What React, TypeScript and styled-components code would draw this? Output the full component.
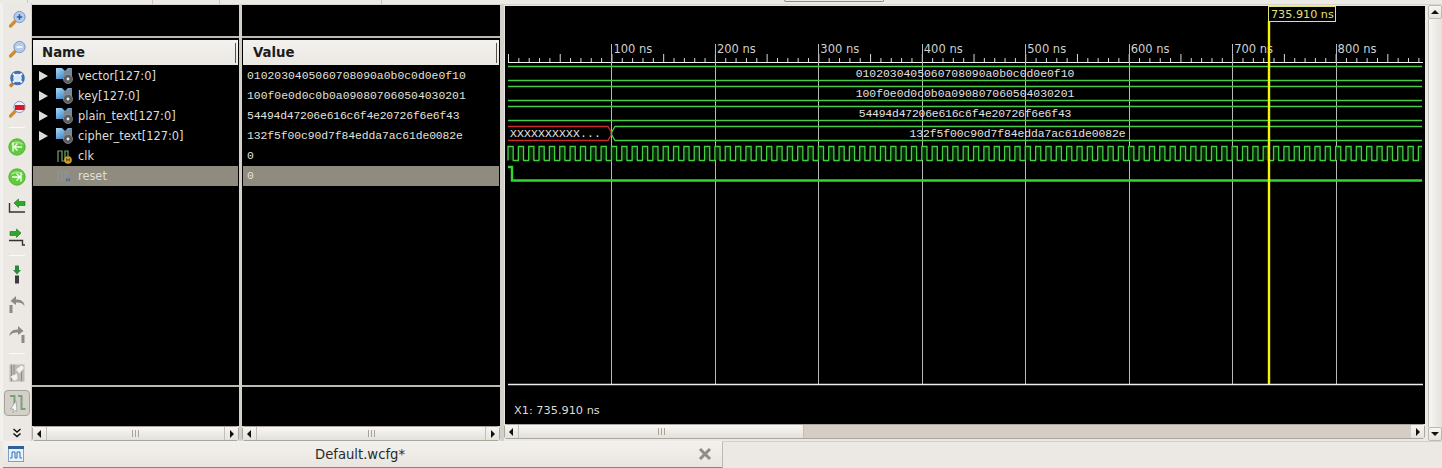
import React from "react";
import styled, { createGlobalStyle } from "styled-components";

const Global = createGlobalStyle`
  html, body { margin: 0; padding: 0; background: #ece9e4; overflow: hidden; }
  #root { width: 1442px; height: 468px; }
`;

const Page = styled.div`
  width: 1442px; height: 468px; display: flex; flex-direction: column;
  background: #ece9e4; font-family: "DejaVu Sans", sans-serif; overflow: hidden;
`;
const TopStrip = styled.div`
  height: 4px; flex: none; display: flex; background: #eceae5; border-bottom: 1px solid #d8d5cf; box-sizing: content-box;
`;
const TopCell = styled.div<{ $w: number }>`
  width: ${(p) => p.$w}px; flex: none; box-sizing: border-box; border-right: 1px solid #c9c6bf;
`;
const TopGap = styled.div<{ $w: number }>`
  width: ${(p) => p.$w}px; flex: none;
`;
const TopTab = styled.div`
  width: 100px; height: 2px; flex: none; box-sizing: border-box; border: 1px solid #8f8c84; border-top: 0; border-radius: 0 0 3px 3px;
`;
const Main = styled.div`
  height: 436px; flex: none; display: flex;
`;
const Toolbar = styled.div`
  width: 32px; flex: none; box-sizing: border-box; margin-top: -2px; display: flex; flex-direction: column; align-items: center;
  background: #ece9e4; border-left: 3px solid #f3f1ee; border-right: 1px solid #d5d2cc;
`;
const ToolBtn = styled.div<{ $on?: boolean }>`
  width: ${(p) => (p.$on ? "26px" : "28px")}; height: ${(p) => (p.$on ? "26px" : "30px")}; flex: none;
  margin: ${(p) => (p.$on ? "2px 0" : "0")};
  display: flex; align-items: center; justify-content: center; box-sizing: border-box;
  ${(p) => (p.$on ? "background:#d3d0c9;border:1px solid #a5a299;border-radius:4px;" : "")}
`;
const ToolSep = styled.div<{ $gap: number }>`
  width: 16px; height: 1px; flex: none; margin: ${(p) => p.$gap}px 0 4px; background: #fbfaf8;
`;
const More = styled.div`
  height: 16px; margin-top: 7px; flex: none; display: flex; align-items: center; justify-content: center;
`;
const Column = styled.div<{ $w: number }>`
  width: ${(p) => p.$w}px; flex: none; display: flex; flex-direction: column;
`;
const Stage = styled.div`
  height: 421px; flex: none; background: #000; display: flex; flex-direction: column;
`;
const Blank = styled.div`
  height: 33px; flex: none; box-sizing: border-box; border-bottom: 2px solid #bdbab3;
`;
const Head = styled.div<{ $pad: number }>`
  height: 25px; margin: 2px 1px 1px; flex: none; box-sizing: border-box; display: flex; align-items: center;
  background: linear-gradient(#f3f1ee, #ebe8e3); font-weight: bold; font-size: 13.3px; color: #1c1c1c;
  padding-left: ${(p) => p.$pad}px;
`;
const HeadLabel = styled.div`
  flex: 1;
`;
const HeadGrip = styled.div`
  width: 1px; height: 20px; margin-right: 2px; background: #55534e;
`;
const Rows = styled.div`
  height: 319px; flex: none; display: flex; flex-direction: column;
`;
const Row = styled.div<{ $sel?: boolean }>`
  height: 20px; flex: none; display: flex; align-items: center; margin: 0 1px;
  background: ${(p) => (p.$sel ? "#8f8c7f" : "transparent")};
  color: #dedcd8; font-size: 11.4px;
`;
const Tri = styled.div<{ $hide?: boolean }>`
  width: 0; height: 0; margin-left: 6px; flex: none;
  border-left: 9px solid ${(p) => (p.$hide ? "transparent" : "#dcdcdc")};
  border-top: 5px solid transparent; border-bottom: 5px solid transparent;
`;
const RowIcon = styled.div`
  width: 18px; height: 18px; margin-left: 8px; flex: none; display: flex;
`;
const RowName = styled.span`
  margin-left: 4px;
`;
const ValueText = styled.span<{ $ls: number }>`
  margin-left: 4px; font-family: "Liberation Mono", monospace; font-size: 11.4px; color: #e2e0dc;
  letter-spacing: ${(p) => p.$ls}px;
`;
const Divider = styled.div`
  height: 2px; flex: none; background: #bdbab3;
`;
const Footer = styled.div`
  flex: 1; display: flex; align-items: center; padding-left: 9px; padding-top: 10px; color: #dedcd8; font-size: 11.3px;
`;
const Splitter = styled.div<{ $w: number }>`
  width: ${(p) => p.$w}px; flex: none; background: #d3d0ca;
`;
const WaveColumn = styled.div`
  width: 921px; flex: none; display: flex; flex-direction: column;
`;
const WaveStage = styled.div`
  height: 419px; flex: none; background: #000; display: flex; flex-direction: column; border-left: 1px solid #e8e6e2; border-top: 1px solid #e8e6e2; box-sizing: border-box;
`;
const HScroll = styled.div`
  height: 15px; flex: none; display: flex; box-sizing: border-box;
  border: 1px solid #a9a69e; border-radius: 3px; background: #d6cec4;
`;
const ArrowBtn = styled.div`
  width: 13px; flex: none; display: flex; align-items: center; justify-content: center;
  background: linear-gradient(#f6f5f2, #e6e3dd); box-sizing: border-box;
`;
const Thumb = styled.div<{ $w?: number }>`
  ${(p) => (p.$w ? `width:${p.$w}px;flex:none;` : "flex:1;")}
  display: flex; align-items: center; justify-content: center;
  background: linear-gradient(#f8f7f4, #e4e1db); border-left: 1px solid #c2bfb8; border-right: 1px solid #c2bfb8; box-sizing: border-box;
`;
const Track = styled.div`
  flex: 1; background: #d6cec4;
`;
const Grip = styled.div`
  width: 7px; height: 7px; background: repeating-linear-gradient(90deg, #a6a39c 0 1px, transparent 1px 3px);
`;
const VScroll = styled.div`
  width: 17px; flex: none; height: 436px; box-sizing: border-box; padding-left: 3px; display: flex; flex-direction: column;
`;
const VBtn = styled.div`
  height: 14px; flex: none; display: flex; align-items: center; justify-content: center; box-sizing: border-box;
  background: linear-gradient(#f6f5f2, #e6e3dd); border: 1px solid #bdbab3; border-radius: 2px;
`;
const VThumb = styled.div`
  flex: 1; background: linear-gradient(90deg, #f7f6f3, #e5e2dc); border-left: 1px solid #bdbab3;
`;
const TabBar = styled.div`
  height: 28px; flex: none; display: flex;
`;
const Tab = styled.div`
  width: 719px; margin-left: 3px; flex: none; box-sizing: border-box; display: flex; align-items: center;
  background: linear-gradient(#f3f1ee, #e9e6e1); border-bottom: 2px solid #6a8cad; padding-left: 5px;
`;
const TabTitle = styled.div`
  flex: 1; text-align: center; font-size: 13.2px; color: #2a2a2a; margin-left: 30px; margin-right: 32px; padding-top: 1px;
`;
const TabClose = styled.div`
  width: 14px; height: 14px; margin-right: 10px; flex: none; display: flex;
`;
const TabRest = styled.div`
  flex: 1; box-sizing: border-box; border-left: 1px solid #bdbab3; border-top: 1px solid #d5d2cc;
`;

const Icon = ({ children, size = 24 }: { children: React.ReactNode; size?: number }) => (
  <svg width={size} height={size} viewBox="0 0 24 24">{children}</svg>
);

const Magnifier = ({ glyph }: { glyph: "plus" | "minus" | "red" }) => (
  <Icon>
    <path d="M5.5 20 L10 15.5" stroke="#d08c2c" strokeWidth="3.2" strokeLinecap="round" />
    <circle cx="14.5" cy="11" r="5.6" fill={glyph === "red" ? "#f1ecec" : "#b4cbea"} stroke="#7d97c4" strokeWidth="1" />
    {glyph === "plus" && <path d="M11.8 11h5.4M14.5 8.3v5.4" stroke="#2a5aa8" strokeWidth="1.5" />}
    {glyph === "minus" && <path d="M11.5 11h6" stroke="#f4f7ff" strokeWidth="1.8" />}
    {glyph === "red" && <rect x="10" y="9" width="9.6" height="5" fill="#e0142c" />}
  </Icon>
);
const Ring = () => (
  <Icon>
    <path d="M5 20.5 L8 17.5" stroke="#c98324" strokeWidth="3.4" />
    <circle cx="12.5" cy="12" r="5.8" fill="#dbe7f6" stroke="#3f70b8" strokeWidth="3" />
    <path d="M8 7.5l2.8 2.8M17 7.5l-2.8 2.8M8 16.5l2.8-2.8M17 16.5l-2.8-2.8" stroke="#f0f4fb" strokeWidth="2" />
  </Icon>
);
const GreenNav = ({ right }: { right?: boolean }) => (
  <Icon>
    <circle cx="12" cy="12" r="8.2" fill="#62cc3e" stroke="#46a52e" strokeWidth="0.8" />
    <path d="M6.5 9.5 A8 8 0 0 1 17.5 9.5" stroke="#a4e88a" strokeWidth="1.5" fill="none" />
    <g stroke="#f2fff0" strokeWidth="1.4" fill="none" transform={right ? "matrix(-1 0 0 1 24 0)" : undefined}>
      <path d="M8 7.5v9M17 12H9M12.5 8.5 9 12l3.5 3.5" />
    </g>
  </Icon>
);
const StepBack = () => (
  <Icon>
    <path d="M4.5 8v9H20" stroke="#333" strokeWidth="1.4" fill="none" />
    <path d="M9 8 L13.5 4 V6.5 H20 V10.5 H13.5 V12.5 Z" fill="#2ea82e" stroke="#176e17" strokeWidth="0.6" />
  </Icon>
);
const StepFwd = () => (
  <Icon>
    <path d="M4 15.5H17.5V20H20" stroke="#333" strokeWidth="1.4" fill="none" />
    <path d="M16 8 L11.5 4 V6.5 H5 V10.5 H11.5 V12.5 Z" fill="#2ea82e" stroke="#176e17" strokeWidth="0.6" />
  </Icon>
);
const Drop = () => (
  <Icon>
    <path d="M12 11.5 L8 7H10V2.5h4V7h2Z" fill="#2b8a3a" />
    <rect x="10" y="12.5" width="4" height="8" fill="#3c3c3c" />
  </Icon>
);
const Hop = ({ flip }: { flip?: boolean }) => (
  <Icon>
    <g transform={flip ? "matrix(-1 0 0 1 24 0)" : undefined}>
      <rect x="4.5" y="12" width="3" height="8" fill="#8a8a86" />
      <path d="M11 3 5.5 8 11 12V9.5C14.5 9 17.5 10 19.5 13 19.5 9 16 6 11 6.5Z" fill="#8a8a86" />
    </g>
  </Icon>
);
const Swap = () => (
  <Icon>
    <rect x="4.5" y="3.5" width="15" height="17" fill="#bdbbb4" />
    <path d="M6.5 3.5v17M9 3.5v17M16.5 3.5v17" stroke="#8f8d86" strokeWidth="1" />
    <path d="M17 4 11 8.5 14.5 12.5 19 7Z M9 20 5.5 15.5 12 12.5 12.5 18Z" fill="#f2f1ed" />
  </Icon>
);
const Cursor = () => (
  <Icon>
    <path d="M5 5h4.5v13M13 5h3.5v13h4" stroke="#7f9f7a" strokeWidth="2" fill="none" />
    <path d="M11 10 L5.5 18 L8.5 18 L8 21.5 L10.5 19.5 L12 20Z" fill="#f4f4f2" stroke="#666" strokeWidth="0.4" />
  </Icon>
);
const BusSignal = () => (
  <svg width="18" height="18" viewBox="0 0 18 18">
    <defs>
      <linearGradient id="busg" x1="0" y1="0" x2="1" y2="1">
        <stop offset="0" stopColor="#a8dcf8" />
        <stop offset="1" stopColor="#1c68b4" />
      </linearGradient>
    </defs>
    <path d="M0 1h6l3 3 3-3h4v11H0Z" fill="url(#busg)" />
    <path d="M8 5l8-4v9l-4 3H8Z" fill="#7a8a99" />
    <circle cx="12" cy="12" r="4.6" fill="#5c5f62" stroke="#9a9da0" strokeWidth="0.6" />
    <circle cx="12" cy="12" r="1.4" fill="#e8e8e8" />
  </svg>
);
const BitSignal = ({ dim }: { dim?: boolean }) => (
  <svg width="18" height="18" viewBox="0 0 18 18" opacity={dim ? 0.55 : 1}>
    <path d="M2 15V4h4v10h3V4h3v5" stroke={dim ? "#8aa0b0" : "#6ea86e"} strokeWidth="1.2" fill="none" />
    <circle cx="12" cy="13" r="3.8" fill={dim ? "#7d94b0" : "#d9a520"} />
    <path d="M10.6 14.5v-3l1.4 2 1.4-2v3" stroke="#2a2a2a" strokeWidth="0.7" fill="none" />
  </svg>
);
const Arr = ({ dir }: { dir: "l" | "r" | "u" | "d" }) => {
  const d = { l: "M6 1v8L2 5Z", r: "M3 1v8l4-4Z", u: "M1 7h8L5 3Z", d: "M1 3h8L5 7Z" }[dir];
  return <svg width="10" height="10" viewBox="0 0 10 10"><path d={d} fill="#111" /></svg>;
};

const signals = [
  { name: "vector[127:0]", value: "0102030405060708090a0b0c0d0e0f10", bus: true, ls: 0 },
  { name: "key[127:0]", value: "100f0e0d0c0b0a090807060504030201", bus: true, ls: 0 },
  { name: "plain_text[127:0]", value: "54494d47206e616c6f4e20726f6e6f43", bus: true, ls: -0.2 },
  { name: "cipher_text[127:0]", value: "132f5f00c90d7f84edda7ac61de0082e", bus: true, ls: -0.09 },
  { name: "clk", value: "0", bus: false, ls: 0 },
  { name: "reset", value: "0", bus: false, sel: true, ls: 0 },
];

const X0 = 508;
const PX_PER_NS = 1.0345;
const XEND = 1422;
const xAt = (ns: number) => X0 + ns * PX_PER_NS;

const Waves = () => {
  const major = [100, 200, 300, 400, 500, 600, 700, 800];
  const minor: number[] = [];
  for (let ns = 0; xAt(ns) <= XEND; ns += 10) minor.push(ns);
  let clock = `M${X0} 160`;
  let clockFill = "";
  for (let i = 0; ; i++) {
    const a = X0 + i * 10.345;
    const b = a + 5.17;
    const c = a + 10.345;
    if (a >= XEND) break;
    const bb = Math.min(b, XEND);
    clock += ` L${a} 160.5 L${a} 146.5 L${bb} 146.5`;
    if (b < XEND) clock += ` L${b} 160.5 L${Math.min(c, XEND)} 160.5`;
    clockFill += `M${a} 147H${bb}V160H${a}Z `;
  }
  const busRows = [
    { y: 66, s: signals[0] },
    { y: 86, s: signals[1] },
    { y: 106, s: signals[2] },
  ];
  const mono = "Liberation Mono, monospace";
  return (
    <svg width="919" height="380" viewBox="505 6 919 380" style={{ display: "block", flex: "none" }}>
      <path d={`M${X0} 62.5H1423`} stroke="#f4f4f4" strokeWidth="1" />
      {minor.map((ns) => (
        <path key={ns} d={`M${xAt(ns) + 0.5} ${ns % 50 === 0 ? 54 : 58}V62`} stroke="#d8d8d8" strokeWidth="1" />
      ))}
      {major.map((ns) => (
        <g key={ns}>
          <path d={`M${Math.round(xAt(ns)) + 0.5} 44V384`} stroke="#b9b9b9" strokeWidth="1" />
          <text x={xAt(ns) + 2} y="53" fill="#cfcfcf" fontFamily="DejaVu Sans, sans-serif" fontSize="11.5">{ns} ns</text>
        </g>
      ))}
      <path d={`M${X0} 384.5H1423`} stroke="#ededed" strokeWidth="1.4" />
      {busRows.map((r) => (
        <g key={r.y}>
          <path d={`M${X0} ${r.y + 0.5}H${XEND}M${X0} ${r.y + 14.5}H${XEND}`} stroke="#46cc46" strokeWidth="1.3" />
          <text x="965" y={r.y + 11} textAnchor="middle" fill="#e2e2e2" fontFamily={mono} fontSize="11.4" letterSpacing={r.s.ls}>{r.s.value}</text>
        </g>
      ))}
      <path d="M508 126.5H608L612 133.5L608 140.5H508" stroke="#c82a2a" strokeWidth="1.3" fill="none" />
      <path d={`M${XEND} 126.5H615L611 133.5L615 140.5H${XEND}`} stroke="#46cc46" strokeWidth="1.3" fill="none" />
      <text x="510" y="137" fill="#e8e8e8" fontFamily={mono} fontSize="11.4" letterSpacing="0.16">XXXXXXXXXX...</text>
      <text x="1017.5" y="137" textAnchor="middle" fill="#e2e2e2" fontFamily={mono} fontSize="11.4" letterSpacing={signals[3].ls}>{signals[3].value}</text>
      <path d={clockFill} fill="#082c08" />
      <path d={clock} stroke="#40d040" strokeWidth="1.3" fill="none" />
      <path d={`M508 167H512V180.5H${XEND}`} stroke="#2fd82f" strokeWidth="2.4" fill="none" />
      <path d="M1269 21V384" stroke="#f4f400" strokeWidth="2.4" />
      <rect x="1268.5" y="6.5" width="67" height="15" fill="#000" stroke="#e2e27a" strokeWidth="1" />
      <text x="1271" y="18" fill="#e0e070" fontFamily="DejaVu Sans, sans-serif" fontSize="11.2">735.910 ns</text>
    </svg>
  );
};

const LeftScroll = () => (
  <HScroll>
    <ArrowBtn><Arr dir="l" /></ArrowBtn>
    <Thumb><Grip /></Thumb>
    <ArrowBtn><Arr dir="r" /></ArrowBtn>
  </HScroll>
);

export default function App() {
  return (
    <Page>
      <Global />
      <TopStrip>
        <TopCell $w={28} />
        <TopCell $w={125} />
        <TopCell $w={67} />
        <TopCell $w={162} />
        <TopGap $w={402} />
        <TopTab />
      </TopStrip>
      <Main>
        <Toolbar>
          <ToolBtn><Magnifier glyph="plus" /></ToolBtn>
          <ToolBtn><Magnifier glyph="minus" /></ToolBtn>
          <ToolBtn><Ring /></ToolBtn>
          <ToolBtn><Magnifier glyph="red" /></ToolBtn>
          <ToolSep $gap={4} />
          <ToolBtn><GreenNav /></ToolBtn>
          <ToolBtn><GreenNav right /></ToolBtn>
          <ToolBtn><StepBack /></ToolBtn>
          <ToolBtn><StepFwd /></ToolBtn>
          <ToolSep $gap={3} />
          <ToolBtn><Drop /></ToolBtn>
          <ToolBtn><Hop /></ToolBtn>
          <ToolBtn><Hop flip /></ToolBtn>
          <ToolSep $gap={3} />
          <ToolBtn><Swap /></ToolBtn>
          <ToolBtn $on><Cursor /></ToolBtn>
          <More>
            <svg width="10" height="10" viewBox="0 0 10 10">
              <path d="M1.5 1 5 4 8.5 1M1.5 5.5 5 8.5 8.5 5.5" stroke="#111" strokeWidth="1.5" fill="none" />
            </svg>
          </More>
        </Toolbar>
        <Column $w={207}>
          <Stage>
            <Blank />
            <Head $pad={9}><HeadLabel>Name</HeadLabel><HeadGrip /></Head>
            <Rows>
              {signals.map((s) => (
                <Row key={s.name} $sel={s.sel}>
                  <Tri $hide={!s.bus} />
                  <RowIcon>{s.bus ? <BusSignal /> : <BitSignal dim={s.sel} />}</RowIcon>
                  <RowName>{s.name}</RowName>
                </Row>
              ))}
            </Rows>
            <Divider />
          </Stage>
          <LeftScroll />
        </Column>
        <Splitter $w={3} />
        <Column $w={258}>
          <Stage>
            <Blank />
            <Head $pad={10}><HeadLabel>Value</HeadLabel><HeadGrip /></Head>
            <Rows>
              {signals.map((s) => (
                <Row key={s.name} $sel={s.sel}>
                  <ValueText $ls={s.ls}>{s.value}</ValueText>
                </Row>
              ))}
            </Rows>
            <Divider />
          </Stage>
          <LeftScroll />
        </Column>
        <Splitter $w={4} />
        <WaveColumn>
          <WaveStage>
            <Waves />
            <Footer>X1: 735.910 ns</Footer>
          </WaveStage>
          <HScroll>
            <ArrowBtn><Arr dir="l" /></ArrowBtn>
            <Thumb $w={286}><Grip /></Thumb>
            <Track />
            <ArrowBtn><Arr dir="r" /></ArrowBtn>
          </HScroll>
        </WaveColumn>
        <VScroll>
          <VBtn><Arr dir="u" /></VBtn>
          <VThumb />
          <VBtn><Arr dir="d" /></VBtn>
        </VScroll>
      </Main>
      <TabBar>
        <Tab>
          <svg width="16" height="16" viewBox="0 0 16 16">
            <rect x="0.5" y="0.5" width="15" height="15" fill="#eaf2fa" stroke="#7f9fc4" />
            <rect x="0" y="0" width="16" height="3" fill="#2f5f9e" />
            <path d="M2 12h2V6h3v6h2V6h3v6h2" stroke="#2f6fb8" strokeWidth="1" fill="none" />
          </svg>
          <TabTitle>Default.wcfg*</TabTitle>
          <TabClose>
            <svg width="14" height="14" viewBox="0 0 14 14">
              <path d="M2 2 12 12M12 2 2 12" stroke="#8e8c86" strokeWidth="3" />
            </svg>
          </TabClose>
        </Tab>
        <TabRest />
      </TabBar>
    </Page>
  );
}
